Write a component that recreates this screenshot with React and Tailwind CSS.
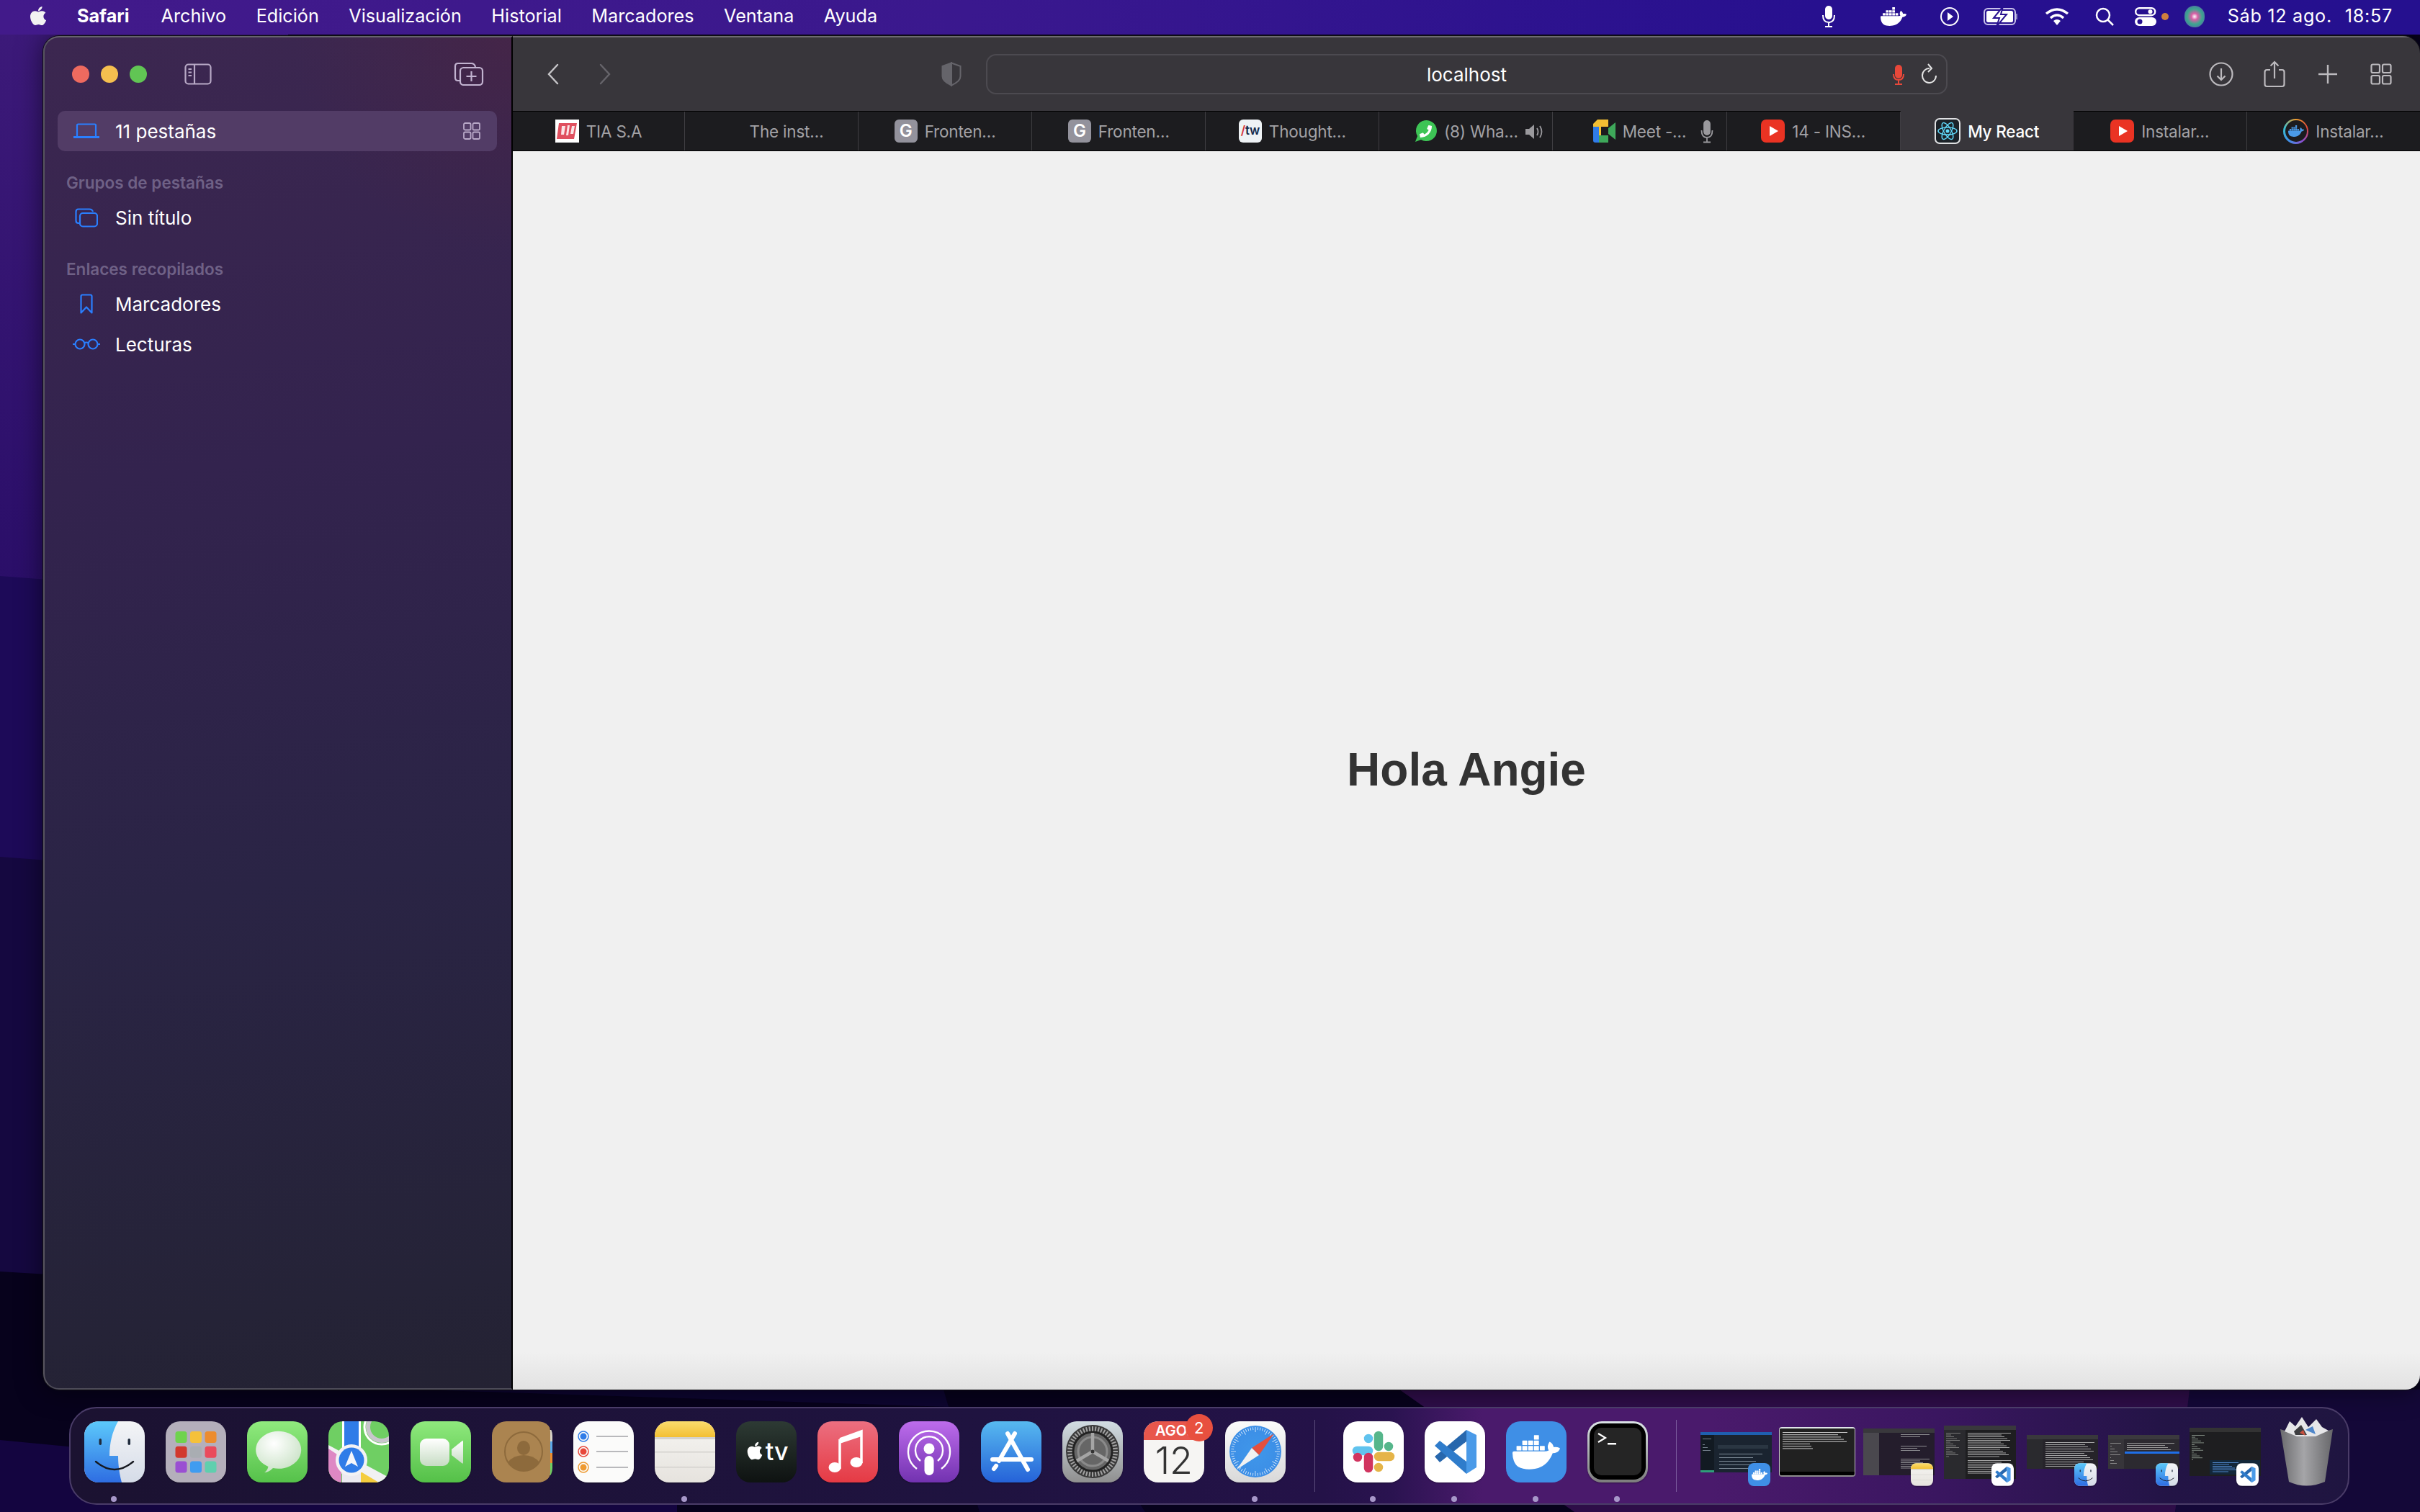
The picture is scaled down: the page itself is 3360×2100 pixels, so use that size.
import React from "react";
import { FaApple, FaPhoneAlt } from "react-icons/fa";
import { SiDocker } from "react-icons/si";

const UI = { fontFamily: '"Inter","Noto Sans",sans-serif' };

/* ---------- dock icon shell ---------- */
function Sq({ small, children, className = "" }) {
  return (
    <div className={(small ? "w-[31px] h-[32px] rounded-[8px] " : "w-[84px] h-[85px] rounded-[20px] ") + "overflow-hidden shrink-0 shadow-[0_1px_2px_rgba(0,0,0,.35)] " + className}>
      <svg viewBox="0 0 84 85" className="block w-full h-full">{children}</svg>
    </div>
  );
}

function Finder({ small }) {
  return (
    <Sq small={small}>
      <defs>
        <linearGradient id={small ? "fa2" : "fa"} x1="0" y1="0" x2="0" y2="1"><stop offset="0" stopColor="#5cc9fb" /><stop offset="1" stopColor="#2e6de2" /></linearGradient>
        <linearGradient id={small ? "fb2" : "fb"} x1="0" y1="0" x2="0" y2="1"><stop offset="0" stopColor="#f4f5f7" /><stop offset="1" stopColor="#d5dce8" /></linearGradient>
      </defs>
      <rect width="84" height="85" fill={`url(#${small ? "fb2" : "fb"})`} />
      <path d="M0 0H47C39 14 35 30 35 48H47C47 62 49 74 52 85H0Z" fill={`url(#${small ? "fa2" : "fa"})`} />
      <rect x="20.5" y="24" width="3.5" height="9" rx="1.7" fill="#1e2a3c" />
      <rect x="60.5" y="24" width="3.5" height="9" rx="1.7" fill="#1e2a3c" />
      <path d="M16 56Q42 78 68 56" fill="none" stroke="#15181f" strokeWidth="2.4" strokeLinecap="round" />
    </Sq>
  );
}
function Launchpad() {
  const c = ["#6fd34e", "#f5c13a", "#ec8c2f", "#d2382d", "#a9adb2", "#ea4a5c", "#9a4fd2", "#3f9cf0", "#5fcfae"];
  return (
    <Sq>
      <rect width="84" height="85" fill="#b4afbb" />
      {c.map((f, i) => <rect key={i} x={13.5 + (i % 3) * 20.5} y={14 + Math.floor(i / 3) * 20.8} width="16" height="16" rx="3.5" fill={f} />)}
    </Sq>
  );
}
function Messages() {
  return (
    <Sq>
      <defs>
        <linearGradient id="mg" x1="0" y1="0" x2="0" y2="1"><stop offset="0" stopColor="#90ea7e" /><stop offset="1" stopColor="#55c14a" /></linearGradient>
        <radialGradient id="mb" cx=".4" cy=".3" r=".8"><stop offset="0" stopColor="#ffffff" /><stop offset="1" stopColor="#c4dfc0" /></radialGradient>
      </defs>
      <rect width="84" height="85" fill="url(#mg)" />
      <path d="M24 71Q28 69 29.500 63A31.500 26 0 1 1 36 65Q30 71 24 71Z" fill="url(#mb)" />
    </Sq>
  );
}
function Maps() {
  return (
    <Sq>
      <rect width="84" height="85" fill="#6fcf63" />
      <path d="M0 33L84 78V85H40L0 62Z" fill="#f1f1f3" />
      <path d="M0 38V85H18V50Z" fill="#de88c4" />
      <path d="M45 85V70L70 85Z" fill="#f4cd3f" />
      <rect x="19" y="0" width="3" height="85" fill="#fff" />
      <rect x="22" y="0" width="20" height="40" fill="#2f7ce8" />
      <rect x="42" y="0" width="3" height="40" fill="#fff" />
      <rect x="19" y="50" width="26" height="35" fill="#eceaf0" />
      <circle cx="74" cy="8" r="24" fill="none" stroke="#fff" strokeWidth="3" />
      <circle cx="74" cy="8" r="19" fill="none" stroke="#c8c6cc" strokeWidth="6" />
      <circle cx="32" cy="54" r="22" fill="#f3f2f4" />
      <circle cx="32" cy="54" r="17.500" fill="#2f7ce8" />
      <path d="M32 41L41 63L32 58L23 63Z" fill="#f4f6fb" />
    </Sq>
  );
}
function FaceTime() {
  return (
    <Sq>
      <defs>
        <linearGradient id="ftg" x1="0" y1="0" x2="0" y2="1"><stop offset="0" stopColor="#8fe97d" /><stop offset="1" stopColor="#54c048" /></linearGradient>
        <linearGradient id="ftw" x1="0" y1="0" x2="0" y2="1"><stop offset="0" stopColor="#ffffff" /><stop offset="1" stopColor="#c6dcc3" /></linearGradient>
      </defs>
      <rect width="84" height="85" fill="url(#ftg)" />
      <rect x="13" y="24" width="41" height="38" rx="9" fill="url(#ftw)" />
      <path d="M57 39L72 27Q73 26 73 29V57Q73 60 71 58L57 47Z" fill="url(#ftw)" />
    </Sq>
  );
}
function Contacts() {
  return (
    <Sq className="!shadow-none">
      <rect width="84" height="85" fill="#1e1336" />
      <rect x="78" y="12" width="6" height="16" fill="#d6d2c8" />
      <rect x="78" y="28" width="6" height="16" fill="#5ba9ea" />
      <rect x="78" y="44" width="6" height="14" fill="#ec8c2f" />
      <rect x="78" y="58" width="6" height="17" fill="#6fcf63" />
      <rect width="81" height="85" rx="14" fill="#ab8450" />
      <ellipse cx="44" cy="42" rx="26" ry="27" fill="none" stroke="#8d6a3c" strokeWidth="2" />
      <ellipse cx="44" cy="37" rx="9" ry="10" fill="#8d6a3c" />
      <path d="M22 57Q30 47 44 47Q58 47 66 57Q57 69 44 69Q31 69 22 57Z" fill="#8d6a3c" />
    </Sq>
  );
}
function Reminders() {
  const rows = [["#2f7ce8", 21], ["#e8483b", 42], ["#ee9a30", 64]];
  return (
    <Sq>
      <rect width="84" height="85" fill="#fbfbfa" />
      {rows.map(([c, y]) => (
        <g key={y}>
          <circle cx="14" cy={y} r="7" fill="none" stroke={c} strokeWidth="1.500" />
          <circle cx="14" cy={y} r="4.500" fill={c} />
          <rect x="32" y={y - 1} width="44" height="2" fill="#b9b9bc" />
        </g>
      ))}
    </Sq>
  );
}
function Notes({ small }) {
  return (
    <Sq small={small}>
      <defs>
        <linearGradient id={small ? "ny2" : "ny"} x1="0" y1="0" x2="0" y2="1"><stop offset="0" stopColor="#fbdc6e" /><stop offset="1" stopColor="#f3bf33" /></linearGradient>
        <linearGradient id={small ? "nw2" : "nw"} x1="0" y1="0" x2="0" y2="1"><stop offset="0" stopColor="#f6f5f2" /><stop offset="1" stopColor="#e6e3de" /></linearGradient>
      </defs>
      <rect width="84" height="85" fill={`url(#${small ? "nw2" : "nw"})`} />
      <rect width="84" height="22" fill={`url(#${small ? "ny2" : "ny"})`} />
      <rect y="22" width="84" height="3" fill="#d4d2cd" />
      <rect y="42" width="84" height="1.500" fill="#d3d1cd" />
      <rect y="63" width="84" height="1.500" fill="#d3d1cd" />
    </Sq>
  );
}
function AppleTV() {
  return (
    <div className="w-[84px] h-[85px] rounded-[20px] bg-[linear-gradient(180deg,#2d3a34,#0e1211)] flex items-center justify-center text-white shrink-0">
      <FaApple className="text-[28px] mr-[1px] -mt-[4px]" />
      <span className="text-[34px] leading-none font-medium -mt-[2px]" style={UI}>tv</span>
    </div>
  );
}
function Music() {
  return (
    <Sq>
      <defs><linearGradient id="mu" x1="0" y1="0" x2="0" y2="1"><stop offset="0" stopColor="#ec6f80" /><stop offset="1" stopColor="#e53a44" /></linearGradient></defs>
      <rect width="84" height="85" fill="url(#mu)" />
      <path d="M31 25L61 14V58" fill="none" stroke="#fff" strokeWidth="3.500" />
      <path d="M31 25V66" fill="none" stroke="#fff" strokeWidth="3.500" />
      <path d="M31 25L61 14V21L31 31Z" fill="#fff" />
      <ellipse cx="24" cy="64" rx="8.500" ry="7" fill="#fff" />
      <ellipse cx="54" cy="57" rx="8.500" ry="7" fill="#fff" />
    </Sq>
  );
}
function Podcasts() {
  return (
    <Sq>
      <defs><linearGradient id="po" x1="0" y1="0" x2="0" y2="1"><stop offset="0" stopColor="#bd6cec" /><stop offset="1" stopColor="#7232b0" /></linearGradient></defs>
      <rect width="84" height="85" fill="url(#po)" />
      <path d="M25 66A29 29 0 1 1 59 66" fill="none" stroke="#fff" strokeWidth="2.400" />
      <path d="M30 55A19 19 0 1 1 54 55" fill="none" stroke="#fff" strokeWidth="2.400" />
      <circle cx="42" cy="38" r="7.500" fill="#fff" />
      <rect x="35.500" y="48" width="13" height="27" rx="6.500" fill="#fff" />
    </Sq>
  );
}
function AppStore() {
  return (
    <Sq>
      <defs><linearGradient id="as" x1="0" y1="0" x2="0" y2="1"><stop offset="0" stopColor="#57b9f0" /><stop offset="1" stopColor="#2562d8" /></linearGradient></defs>
      <rect width="84" height="85" fill="url(#as)" />
      <g stroke="#fff" strokeLinecap="round" fill="none">
        <path d="M47 17L25 55" strokeWidth="6" />
        <path d="M21 62L18 66" strokeWidth="6" />
        <path d="M37 17L65 67" strokeWidth="6" />
        <path d="M16 53H70" strokeWidth="6" />
      </g>
    </Sq>
  );
}
function Settings() {
  const teeth = Array.from({ length: 48 }, (_, i) => i * 7.5);
  return (
    <Sq>
      <defs><linearGradient id="se" x1="0" y1="0" x2="0" y2="1"><stop offset="0" stopColor="#d2dde3" /><stop offset="1" stopColor="#8f8f8f" /></linearGradient></defs>
      <rect width="84" height="85" fill="url(#se)" />
      <circle cx="42" cy="42" r="37" fill="#3a3a3a" />
      {teeth.map((a) => <rect key={a} x="41" y="7" width="2" height="7" fill="#a2a2a2" transform={`rotate(${a} 42 42)`} />)}
      <circle cx="42" cy="42" r="27" fill="#666" stroke="#222" strokeWidth="3" />
      <circle cx="42" cy="42" r="20" fill="none" stroke="#8a8a8a" strokeWidth="3" />
      <path d="M42 42V16M42 42L20 55M42 42L64 55" stroke="#a5a5a5" strokeWidth="4.500" />
      <circle cx="42" cy="42" r="2.500" fill="#333" />
    </Sq>
  );
}
function Calendar() {
  return (
    <div className="relative w-[84px] h-[85px] shrink-0">
      <div className="w-full h-full rounded-[20px] overflow-hidden bg-[#f6f5f3] flex flex-col items-center" style={UI}>
        <div className="w-full h-[26px] bg-[#e8574c] text-white text-[20px] leading-[26px] font-semibold text-center pr-[2px]">AGO.</div>
        <div className="text-[52px] leading-[58px] text-[#333] font-light">12</div>
      </div>
      <div className="absolute -top-[10px] -right-[12px] w-[38px] h-[38px] rounded-full bg-[#e8503f] text-white text-[22px] flex items-center justify-center" style={UI}>2</div>
    </div>
  );
}
function Safari() {
  const ticks = Array.from({ length: 60 }, (_, i) => i * 6);
  return (
    <Sq>
      <defs>
        <linearGradient id="sa" x1="0" y1="0" x2="0" y2="1"><stop offset="0" stopColor="#fbfbfb" /><stop offset="1" stopColor="#d9d9d9" /></linearGradient>
        <radialGradient id="sb"><stop offset="0" stopColor="#3f97ea" /><stop offset="1" stopColor="#3c8ee6" /></radialGradient>
      </defs>
      <rect width="84" height="85" fill="url(#sa)" />
      <circle cx="42" cy="42" r="36" fill="url(#sb)" />
      {ticks.map((a) => <rect key={a} x="41.600" y="8" width=".9" height={a % 30 === 0 ? 7 : 4} fill="#d8e9fa" transform={`rotate(${a} 42 42)`} />)}
      <path d="M68 17L47 47L37 37Z" fill="#e4503f" />
      <path d="M16 67L37 37L47 47Z" fill="#f2f2f2" />
    </Sq>
  );
}
function Slack({ small }) {
  return (
    <Sq small={small}>
      <rect width="84" height="85" fill="#fff" />
      <g fill="none" strokeLinecap="round" strokeWidth="12.500">
        <path d="M35 41H19" stroke="#60c3ee" /><path d="M35 24V24.100" stroke="#60c3ee" />
        <path d="M49 20V35" stroke="#56b68b" /><path d="M63 35V35.100" stroke="#56b68b" />
        <path d="M49 49H65" stroke="#e5b448" /><path d="M49 64V64.100" stroke="#e5b448" />
        <path d="M35 50V65" stroke="#d1345f" /><path d="M20 50V50.100" stroke="#d1345f" />
      </g>
    </Sq>
  );
}
function VSCode({ small }) {
  return (
    <Sq small={small}>
      <rect width="84" height="85" fill="#fff" />
      <path d="M58 12L14 49L21 57L58 28Z" fill="#2767ad" />
      <path d="M58 73L14 34L21 27L58 56Z" fill="#2f7ccb" />
      <path d="M58 12L72 19V64L58 73Z" fill="#4a9ae8" />
    </Sq>
  );
}
function DockerIcon({ small }) {
  return (
    <div className={(small ? "w-[31px] h-[32px] rounded-[8px] text-[22px] " : "w-[84px] h-[85px] rounded-[20px] text-[66px] ") + "bg-[#3f8fe6] flex items-center justify-center text-white shrink-0"}>
      <SiDocker />
    </div>
  );
}
function Terminal() {
  return (
    <Sq>
      <defs><linearGradient id="te" x1="0" y1="0" x2="0" y2="1"><stop offset="0" stopColor="#dbe3e7" /><stop offset="1" stopColor="#7c7c7c" /></linearGradient></defs>
      <rect width="84" height="85" fill="url(#te)" />
      <rect x="3" y="3" width="78" height="78" rx="17" fill="#000" />
      <rect x="9" y="9" width="66" height="66" rx="10" fill="#252525" />
      <path d="M15 17L25 23L15 29" fill="none" stroke="#fff" strokeWidth="2.200" />
      <rect x="28" y="30" width="12" height="2.500" fill="#fff" />
    </Sq>
  );
}
function Trash() {
  return (
    <svg viewBox="0 0 75 97" className="w-[75px] h-[97px] shrink-0">
      <defs>
        <linearGradient id="tr" x1="0" y1="0" x2="1" y2="0"><stop offset="0" stopColor="#6b6b6e" /><stop offset=".45" stopColor="#a5a5a8" /><stop offset="1" stopColor="#67676a" /></linearGradient>
      </defs>
      <path d="M1 17Q37 30 74 17L63 90Q37 101 13 90Z" fill="url(#tr)" />
      <path d="M7 20L14 6L22 13L31 0L40 14L51 3L59 14L68 19L50 27L24 27Z" fill="#e6e6e8" />
      <path d="M20 20L30 11L38 25H22Z" fill="#3d3d40" /><path d="M36 18L46 13L50 24Z" fill="#4f86c9" /><path d="M28 22L33 18L36 26Z" fill="#c8503f" />
    </svg>
  );
}

/* ---------- window thumbnails in the dock ---------- */
const rows = (x, y0, n, step, len, c) => Array.from({ length: n }, (_, i) => [x, y0 + i * step, len - ((i * 13) % 17), c]);
function Lines({ data }) {
  return data.map(([x, y, l, c], i) => <rect key={i} x={x} y={y} width={l} height="1" fill={c || "#8b8b8f"} />);
}
function ThumbArt({ w, h, side, sideFill = "#2a2a2e", fill = "#1e1e20", lines }) {
  return (
    <svg viewBox={`0 0 ${w} ${h}`} className="block w-full h-full">
      <rect width={w} height={h} fill={fill} />
      <rect width={w} height="6" fill="#39383c" />
      {side ? <rect y="6" width={side} height={h - 6} fill={sideFill} /> : null}
      <Lines data={lines} />
    </svg>
  );
}
function Thumbs() {
  return (
    <>
      <div className="relative shrink-0 w-[99px] h-[56px] ml-[33px]">
        <svg viewBox="0 0 99 56" className="block w-full h-full">
          <rect width="99" height="56" fill="#1a2430" /><rect width="99" height="4" fill="#1f5fb0" /><rect y="4" width="19" height="52" fill="#121a22" />
          <rect y="53" width="19" height="3" fill="#2f9e7a" />
          <rect x="24" y="18" width="70" height="5" fill="#2a3642" />
          <Lines data={rows(26, 30, 5, 5, 60, "#7c8a96")} />
          <Lines data={rows(3, 9, 6, 4, 12, "#73808c")} />
        </svg>
        <div className="absolute right-[2px] -bottom-[19px]"><DockerIcon small /></div>
      </div>
      <div className="shrink-0 w-[106px] h-[69px] ml-[10px] rounded-[4px] overflow-hidden border-t-[2px] border-x-[1px] border-b-[2px] border-t-[#dfe4e8] border-x-[#c4c4c4] border-b-[#8c8c8c] bg-black">
        <svg viewBox="0 0 104 65" className="block w-full h-full">
          <rect width="104" height="60" fill="#212121" />
          <Lines data={rows(4, 5, 8, 3.2, 90, "#c9c9c9").map((r, i) => (i > 4 ? [r[0], r[1], r[2] / 2, r[3]] : r))} />
        </svg>
      </div>
      <div className="relative shrink-0 w-[99px] h-[65px] ml-[11px]">
        <ThumbArt w={99} h={65} side={22} sideFill="#4a484e" fill="#241d2c" lines={[...rows(52, 8, 2, 3, 40), ...rows(52, 24, 3, 3, 36), ...rows(52, 42, 6, 2.5, 40)]} />
        <div className="absolute right-[2px] -bottom-[15px]"><Notes small /></div>
      </div>
      <div className="relative shrink-0 w-[100px] h-[74px] ml-[13px]">
        <ThumbArt w={100} h={74} side={30} lines={[...rows(33, 10, 14, 2.5, 60, "#a5a5a5"), ...rows(33, 48, 8, 2.5, 60, "#a5a5a5"), ...rows(3, 10, 14, 2.5, 20, "#777")]} />
        <div className="absolute right-[3px] -bottom-[10px]"><VSCode small /></div>
      </div>
      <div className="relative shrink-0 w-[99px] h-[47px] ml-[15px]">
        <ThumbArt w={99} h={47} side={22} fill="#26242a" lines={rows(26, 10, 12, 3, 68, "#a5a5a5")} />
        <div className="absolute right-[2px] -bottom-[24px]"><Finder small /></div>
      </div>
      <div className="relative shrink-0 w-[99px] h-[47px] ml-[14px]">
        <svg viewBox="0 0 99 47" className="block w-full h-full">
          <rect width="99" height="47" fill="#2c2a30" /><rect width="99" height="6" fill="#3b393e" /><rect y="6" width="22" height="41" fill="#37353a" />
          <Lines data={rows(26, 11, 4, 3, 66, "#9a9a9a")} />
          <rect x="23" y="23" width="76" height="3" fill="#1f6fe8" />
          <Lines data={rows(3, 11, 8, 4, 15, "#888")} />
        </svg>
        <div className="absolute right-[2px] -bottom-[24px]"><Finder small /></div>
      </div>
      <div className="relative shrink-0 w-[99px] h-[67px] ml-[14px]">
        <svg viewBox="0 0 99 67" className="block w-full h-full">
          <rect width="99" height="67" fill="#1e1e20" /><rect width="99" height="6" fill="#333" />
          <Lines data={rows(3, 10, 14, 2.6, 18, "#7f8a80")} />
          <rect x="28" y="45" width="70" height="20" fill="#13273a" />
          <Lines data={rows(32, 48, 6, 2.5, 36, "#4f86c9")} />
        </svg>
        <div className="absolute right-[3px] -bottom-[14px]"><VSCode small /></div>
      </div>
      <div className="ml-[26px]"><Trash /></div>
    </>
  );
}

function DockItem({ running, children }) {
  return (
    <div className="relative w-[84px] h-[85px] shrink-0">
      {children}
      {running ? <div className="absolute -bottom-[27px] left-[37px] w-[8px] h-[8px] rounded-full bg-[#a797c9]" /> : null}
    </div>
  );
}
function Dock() {
  const group1 = [[Finder, 1], [Launchpad], [Messages], [Maps], [FaceTime], [Contacts], [Reminders], [Notes, 1], [AppleTV], [Music], [Podcasts], [AppStore], [Settings], [Calendar], [Safari, 1]];
  const group2 = [[Slack, 1], [VSCode, 1], [DockerIcon, 1], [Terminal, 1]];
  return (
    <div className="mt-[24px] ml-[96px] w-[3166px] h-[136px] rounded-[38px] border-2 border-[#4a3c68] pt-[18px] pl-[19px] bg-[linear-gradient(90deg,#1b1231_0%,#1f1340_40%,#241248_55%,#2a1350_58%,#4a1a6c_62%,#4a1a6c_72%,#3a1660_82%,#231446_92%,#1f1540_100%)]">
      <div className="flex items-center h-[85px]">
        <div className="flex gap-[29.15px]">
          {group1.map(([C, r], i) => <DockItem key={i} running={r}><C /></DockItem>)}
        </div>
        <div className="self-start -mt-[2px] ml-[40px] mr-[39px] w-[1px] h-[100px] bg-[#5c4d7c] shrink-0" />
        <div className="flex gap-[29.15px]">
          {group2.map(([C, r], i) => <DockItem key={i} running={r}><C /></DockItem>)}
        </div>
        <div className="self-start -mt-[2px] ml-[39px] w-[1px] h-[100px] bg-[#7a5a9c] shrink-0" />
        <Thumbs />
      </div>
    </div>
  );
}

/* ---------- menu bar ---------- */
function MenuBar() {
  const items = ["Archivo", "Edición", "Visualización", "Historial", "Marcadores", "Ventana", "Ayuda"];
  return (
    <div className="relative h-[48px] flex items-center pb-[2px] text-white text-[25.2px] bg-[linear-gradient(90deg,#421a8a_0%,#3a188e_40%,#27108f_75%,#25108f_100%)]" style={UI}>
      <FaApple className="ml-[38px] text-[30px] -mt-[2px] text-[#f2f2f2]" />
      <span className="ml-[39px] font-bold">Safari</span>
      <div className="ml-[44px] flex gap-[41.5px]">
        {items.map((t) => <span key={t}>{t}</span>)}
      </div>
      <div className="ml-auto flex items-center pr-[38px]">
        <svg width="20" height="32" viewBox="0 0 20 32" fill="none" stroke="#fff" strokeWidth="2"><rect x="6" y="2" width="8" height="17" rx="4" fill="#fff" /><path d="M2 14Q2 24 10 24Q18 24 18 14M10 24V30M5 30H15" /></svg>
        <SiDocker className="ml-[62px] text-[36px]" />
        <svg className="ml-[46px]" width="28" height="28" viewBox="0 0 28 28" fill="none"><circle cx="14" cy="14" r="12" stroke="#fff" strokeWidth="2" /><path d="M11 8L19 14L11 20Z" fill="#fff" /></svg>
        <svg className="ml-[33px]" width="50" height="28" viewBox="0 0 50 28" fill="none"><rect x="1" y="3" width="43" height="22" rx="5" stroke="#c9c2ea" strokeWidth="2" /><rect x="4" y="6" width="37" height="16" rx="2.500" fill="#fff" /><path d="M46 10V18" stroke="#8f86c8" strokeWidth="2" /><path d="M27 0L14 16H22L18 28L32 11H24Z" fill="#fff" stroke="#27108f" strokeWidth="2" /></svg>
        <svg className="ml-[35px]" width="34" height="26" viewBox="0 0 34 26" fill="none" stroke="#fff" strokeWidth="3.500"><path d="M2 9Q17 -3 32 9" /><path d="M8 15Q17 7 26 15" /><path d="M17 25L12 19Q17 15 22 19Z" fill="#fff" stroke="none" /></svg>
        <svg className="ml-[35px]" width="28" height="28" viewBox="0 0 28 28" fill="none" stroke="#fff" strokeWidth="2.500"><circle cx="12" cy="12" r="9" /><path d="M18.500 18.500L26 26" /></svg>
        <svg className="ml-[28px]" width="30" height="26" viewBox="0 0 30 26"><rect x="1.200" y="1.200" width="27" height="10" rx="5" fill="none" stroke="#fff" strokeWidth="2.400" /><circle cx="21.500" cy="6.200" r="3" fill="#fff" /><rect y="14" width="30" height="12" rx="6" fill="#fff" /><circle cx="7" cy="20" r="3.500" fill="#27108f" /></svg>
        <div className="ml-[7px] w-[10px] h-[10px] rounded-full bg-[#d07f3e]" />
        <div className="ml-[22px] w-[28px] h-[30px] rounded-full bg-[radial-gradient(circle_at_50%_50%,#ffffff_0%,#d85fa5_22%,#3aa78f_52%,#4c7f9c_72%,#8d97a8_100%)]" />
        <div className="ml-[32px] flex gap-[18px] tracking-[.7px]"><span>Sáb 12 ago.</span><span>18:57</span></div>
      </div>
    </div>
  );
}

/* ---------- sidebar ---------- */
function SideRow({ icon, label }) {
  return (
    <div className="h-[56px] ml-[18px] flex items-center text-[26px] text-white">
      <div className="w-[81px] flex justify-center -ml-[1px]">{icon}</div>
      <span>{label}</span>
    </div>
  );
}
function SideHead({ children, className = "" }) {
  return <div className={"h-[40px] ml-[30px] flex items-center text-[22.5px] font-semibold text-[#6f6186] " + className}>{children}</div>;
}
const Blue = "#2a7fff";
function Sidebar() {
  return (
    <div className="w-[652px] shrink-0 flex flex-col border-2 border-l-[#57545f] border-t-[#66636c] border-b-[#4d4b58] border-r-black rounded-l-[22px] bg-[radial-gradient(circle_at_100%_0%,rgba(90,35,55,.3),rgba(90,35,55,0)_300px),linear-gradient(172deg,#3c2750_0%,#33234e_32%,#2a2445_62%,#252337_92%,#242233_100%)]" style={UI}>
      <div className="h-[102px] shrink-0 flex items-center pl-[38px] pr-[38px]">
        <div className="flex gap-[16px]">
          <div className="w-[24px] h-[24px] rounded-full bg-[#ee6a5f]" />
          <div className="w-[24px] h-[24px] rounded-full bg-[#f5bf4f]" />
          <div className="w-[24px] h-[24px] rounded-full bg-[#61c554]" />
        </div>
        <svg className="ml-[52px]" width="38" height="30" viewBox="0 0 38 30" fill="none" stroke="#b8a9c6" strokeWidth="2.200"><rect x="1.500" y="1.500" width="35" height="27" rx="4" /><path d="M14 2V28" /><path d="M5.500 8H10M5.500 12.500H10M5.500 17H10" /></svg>
        <svg className="ml-auto" width="42" height="34" viewBox="0 0 42 34" fill="none" stroke="#c2b3d0" strokeWidth="2.200"><path d="M8 26H6Q2 26 2 22V6Q2 2 6 2H24Q29 2 30 7" /><rect x="9" y="8" width="31" height="24" rx="4.500" /><path d="M24.500 13V27M17.500 20H31.500" /></svg>
      </div>
      <div className="h-[56px] ml-[18px] mr-[20px] shrink-0 rounded-[10px] bg-[#523c66] flex items-center text-[26px] text-white">
        <div className="w-[81px] flex justify-center -ml-[1px]">
          <svg width="36" height="22" viewBox="0 0 36 22" fill="none" stroke={Blue} strokeWidth="2.200"><path d="M5 18V3Q5 1.500 6.500 1.500H29.500Q31 1.500 31 3V18" /><path d="M0 19.500H36" strokeWidth="3" /></svg>
        </div>
        <span>11 pestañas</span>
        <svg className="ml-auto mr-[23px]" width="24" height="24" viewBox="0 0 24 24" fill="none" stroke="#b9a9c8" strokeWidth="1.800"><rect x="1" y="1" width="9.500" height="9.500" rx="1.800" /><rect x="13.500" y="1" width="9.500" height="9.500" rx="1.800" /><rect x="1" y="13.500" width="9.500" height="9.500" rx="1.800" /><rect x="13.500" y="13.500" width="9.500" height="9.500" rx="1.800" /></svg>
      </div>
      <SideHead className="mt-[24px]">Grupos de pestañas</SideHead>
      <SideRow label="Sin título" icon={<svg width="32" height="27" viewBox="0 0 32 27" fill="none" stroke={Blue} strokeWidth="2.200"><path d="M6 21H5Q1.500 21 1.500 17.500V5Q1.500 1.500 5 1.500H20Q24 1.500 25 5" /><rect x="7" y="7" width="24" height="18.500" rx="4" /></svg>} />
      <SideHead className="mt-[24px]">Enlaces recopilados</SideHead>
      <SideRow label="Marcadores" icon={<svg width="18" height="28" viewBox="0 0 18 28" fill="none" stroke={Blue} strokeWidth="2.200"><path d="M1.500 26.500V3.500Q1.500 1.500 3.500 1.500H14.500Q16.500 1.500 16.500 3.500V26.500L9 18.500Z" strokeLinejoin="round" /></svg>} />
      <SideRow label="Lecturas" icon={<svg width="38" height="16" viewBox="0 0 38 16" fill="none" stroke={Blue} strokeWidth="2.200"><circle cx="10" cy="8" r="6.500" /><circle cx="28" cy="8" r="6.500" /><path d="M16 6.500Q19 4.500 22 6.500M3.500 8H0M34.500 8H38" /></svg>} />
    </div>
  );
}

/* ---------- toolbar + tabs ---------- */
function Toolbar() {
  const S = "#bcbabe";
  return (
    <div className="h-[104px] shrink-0 flex items-center border-t-2 border-[#6d6b70] bg-[#38363b] pl-[46px]">
      <svg width="20" height="30" viewBox="0 0 20 30" fill="none" stroke="#c6c5c8" strokeWidth="2.400" strokeLinecap="round"><path d="M16 2L4 15L16 28" /></svg>
      <svg className="ml-[52px]" width="20" height="30" viewBox="0 0 20 30" fill="none" stroke="#66646a" strokeWidth="2.400" strokeLinecap="round"><path d="M4 2L16 15L4 28" /></svg>
      <svg className="ml-[457px]" width="28" height="34" viewBox="0 0 28 34" fill="none"><path d="M14 1.500L26.500 6V20Q26.500 27 14 32.500Z" stroke="#65646a" strokeWidth="2" /><path d="M14 1.500L1.500 6V20Q1.500 27 14 32.500Z" fill="#65646a" stroke="#65646a" strokeWidth="2" /></svg>
      <div className="relative ml-[34px] w-[1335px] h-[56px] rounded-[14px] border-2 border-[#4c4a50] flex items-center justify-center text-white text-[26px]" style={UI}>
        <span>localhost</span>
        <svg className="absolute right-[58px] top-[13px]" width="16" height="28" viewBox="0 0 16 28" fill="none" stroke="#e8483a" strokeWidth="2"><rect x="4" y="1" width="8" height="17" rx="4" fill="#e8483a" /><path d="M1 13Q1 21 8 21Q15 21 15 13M8 21V26M3 27H13" /></svg>
        <svg className="absolute right-[12px] top-[11px]" width="22" height="32" viewBox="0 0 22 32" fill="none" stroke="#e5e5e5" strokeWidth="2"><path d="M11 7A9.500 10 0 1 0 20 17" /><path d="M9 1L14 7L9 12" /></svg>
      </div>
      <svg className="ml-[363px]" width="34" height="34" viewBox="0 0 34 34" fill="none" stroke={S} strokeWidth="2.200"><circle cx="17" cy="17" r="15.500" /><path d="M17 9V25M11.500 19.500L17 25L22.500 19.500" /></svg>
      <svg className="ml-[42px]" width="30" height="38" viewBox="0 0 30 38" fill="none" stroke={S} strokeWidth="2.200"><path d="M9 13H4.500Q1.500 13 1.500 16V33Q1.500 36 4.500 36H25.500Q28.500 36 28.500 33V16Q28.500 13 25.500 13H21" /><path d="M15 25V2M9.500 7.500L15 2L20.500 7.500" /></svg>
      <svg className="ml-[45px]" width="28" height="28" viewBox="0 0 28 28" fill="none" stroke={S} strokeWidth="2.400"><path d="M14 1V27M1 14H27" /></svg>
      <svg className="ml-[45px]" width="30" height="30" viewBox="0 0 30 30" fill="none" stroke={S} strokeWidth="2.200"><rect x="1.500" y="1.500" width="11.500" height="11.500" rx="2" /><rect x="17" y="1.500" width="11.500" height="11.500" rx="2" /><rect x="1.500" y="17" width="11.500" height="11.500" rx="2" /><rect x="17" y="17" width="11.500" height="11.500" rx="2" /></svg>
    </div>
  );
}

const Tia = () => (
  <svg width="33" height="32" viewBox="0 0 33 32"><rect width="33" height="32" fill="#fff" /><path d="M5 5H30L26 27H2Z" fill="#e0505f" /><path d="M9 9H14L12 21H8ZM17 8H20L18 22H15ZM23 9H27L25 20H21Z" fill="#fff" opacity=".85" /></svg>
);
const G = () => <div className="w-[32px] h-[32px] rounded-[6px] bg-[#93929c] text-white text-[24px] font-semibold flex items-center justify-center">G</div>;
const Tw = () => <div className="w-[32px] h-[32px] rounded-[6px] bg-[#eef2f5] text-[#12294a] text-[17px] font-semibold flex items-center justify-center"><span className="text-[#d8333a]">/</span>tw</div>;
const Wa = () => (
  <div className="relative w-[32px] h-[32px] flex items-center justify-center text-white text-[17px]">
    <svg className="absolute inset-0" width="32" height="32" viewBox="0 0 32 32"><path d="M2 31L5 23A14.500 14.500 0 1 1 10 28Z" fill="#3dc455" /></svg>
    <FaPhoneAlt className="relative -scale-x-100" />
  </div>
);
const Meet = () => (
  <svg width="31" height="32" viewBox="0 0 31 32"><path d="M6 0H21V10H11V22H0V6Z" fill="#f3bf33" /><path d="M0 10H8V32H3Q0 32 0 29Z" fill="#2f7ce8" /><path d="M8 22H21V32H8Z" fill="#3ea85a" /><path d="M11 10H21V22H11Z" fill="#1c1c1f" /><path d="M21 12L31 4V28L21 20Z" fill="#3ea85a" /></svg>
);
const Yt = () => (
  <svg width="33" height="32" viewBox="0 0 33 32"><rect width="33" height="32" rx="7" fill="#ea3323" /><path d="M12 9L24 16L12 23Z" fill="#fff" /></svg>
);
const Re = () => (
  <svg width="36" height="36" viewBox="0 0 36 36" fill="none"><rect x="1" y="1" width="34" height="34" rx="6" fill="#1c2228" stroke="#dfe0e2" strokeWidth="2" /><g stroke="#61dafb" strokeWidth="1.400"><ellipse cx="18" cy="18" rx="13" ry="5" /><ellipse cx="18" cy="18" rx="13" ry="5" transform="rotate(60 18 18)" /><ellipse cx="18" cy="18" rx="13" ry="5" transform="rotate(120 18 18)" /></g><circle cx="18" cy="18" r="2.500" fill="#61dafb" /></svg>
);
const Dk = () => (
  <div className="relative w-[35px] h-[35px] rounded-full bg-[conic-gradient(#f0a030,#e8483a,#8a4fd0,#3f8fe6,#3ac0d0,#f0a030)] flex items-center justify-center">
    <div className="w-[30px] h-[30px] rounded-full bg-[#1c1c1f] flex items-center justify-center text-[22px] text-[#4a9ae8]"><SiDocker /></div>
  </div>
);
function Tab({ icon, label, active, extra, last, className = "flex-1" }) {
  return (
    <div className={"relative min-w-0 flex items-center justify-center gap-[10px] " + className + " " + (active ? "bg-[#38363b] text-white font-medium -mt-[1px] " : "text-[#a3a2a6] " + (last ? "" : "border-r border-[#3f3e42]"))}>
      {icon}
      <span className="pt-[2px]">{label}</span>
      {extra}
    </div>
  );
}
function Tabs() {
  const Spk = (
    <svg className="absolute right-[10px] top-[16px]" width="28" height="24" viewBox="0 0 28 24"><path d="M1 8H6L13 2V22L6 16H1Z" fill="#9a999d" /><path d="M17 7Q20 12 17 17M21 4Q26 12 21 20" fill="none" stroke="#9a999d" strokeWidth="1.800" /></svg>
  );
  const Mic = (
    <svg className="absolute right-[18px] top-[12px]" width="18" height="32" viewBox="0 0 18 32" fill="none" stroke="#9a999d" strokeWidth="1.800"><rect x="5" y="1" width="8" height="19" rx="4" fill="#9a999d" /><path d="M1.500 14Q1.500 24 9 24Q16.500 24 16.500 14M9 24V30M4 30.500H14" /></svg>
  );
  return (
    <div className="h-[55px] shrink-0 flex bg-[#1c1c1f] border-t border-black text-[22.5px] tracking-[-.2px]" style={UI}>
      <Tab icon={<Tia />} label="TIA S.A" className="w-[239px] shrink-0" />
      <Tab icon={<div className="w-[32px]" />} label="The inst…" />
      <Tab icon={<G />} label="Fronten…" />
      <Tab icon={<G />} label="Fronten…" />
      <Tab icon={<Tw />} label="Thought…" />
      <Tab icon={<Wa />} label="(8) Wha…" extra={Spk} />
      <Tab icon={<Meet />} label="Meet -…" extra={Mic} />
      <Tab icon={<Yt />} label="14 - INS…" />
      <Tab icon={<Re />} label="My React" active />
      <Tab icon={<Yt />} label="Instalar…" />
      <Tab icon={<Dk />} label="Instalar…" last />
    </div>
  );
}

export default function App() {
  return (
    <div className="relative w-[3360px] h-[2100px] overflow-hidden bg-[#0a0420]">
      <svg className="absolute inset-0 w-full h-full" viewBox="0 0 3360 2100" preserveAspectRatio="none">
        <defs>
          <linearGradient id="wa" x1="0" y1="0" x2="0" y2="1"><stop offset="0" stopColor="#3d1a7a" /><stop offset="1" stopColor="#2a0e68" /></linearGradient>
        </defs>
        <rect width="3360" height="2100" fill="#07021c" />
        <path d="M0 0H400V1790L0 1766Z" fill="#150840" />
        <path d="M0 0H400V1220L0 1190Z" fill="#1d0a58" />
        <path d="M0 0H400V830L0 800Z" fill="url(#wa)" />
        <path d="M580 1930H1310L1360 2100H1590L1500 1960Z" fill="#0d0530" />
        <path d="M1943 1930H3060L3020 2100H2186Z" fill="#2e0d48" />
        <path d="M3040 1930H3360V2100H3020Z" fill="#140838" />
        <path d="M0 2000L940 2090V2100H0Z" fill="#140540" />
      </svg>
      <div className="relative">
        <MenuBar />
        <div className="ml-[60px] mt-[2px] h-[1880px] flex rounded-l-[22px] rounded-tr-[24px] rounded-br-[20px] shadow-[0_0_0_1px_#101014,0_0_36px_rgba(0,0,0,.55)]">
          <Sidebar />
          <div className="flex-1 min-w-0 flex flex-col rounded-tr-[24px] rounded-br-[20px] overflow-hidden">
            <Toolbar />
            <Tabs />
            <div className="flex-1 flex items-center justify-center pb-[3px] border-t border-black bg-[linear-gradient(180deg,#f0f0f0_97%,#e2e2e2_100%)] text-[#333] text-[64px] font-bold" style={{ fontFamily: '"Liberation Sans",Arial,sans-serif' }}>
              <h1>Hola Angie</h1>
            </div>
          </div>
        </div>
        <Dock />
      </div>
    </div>
  );
}
